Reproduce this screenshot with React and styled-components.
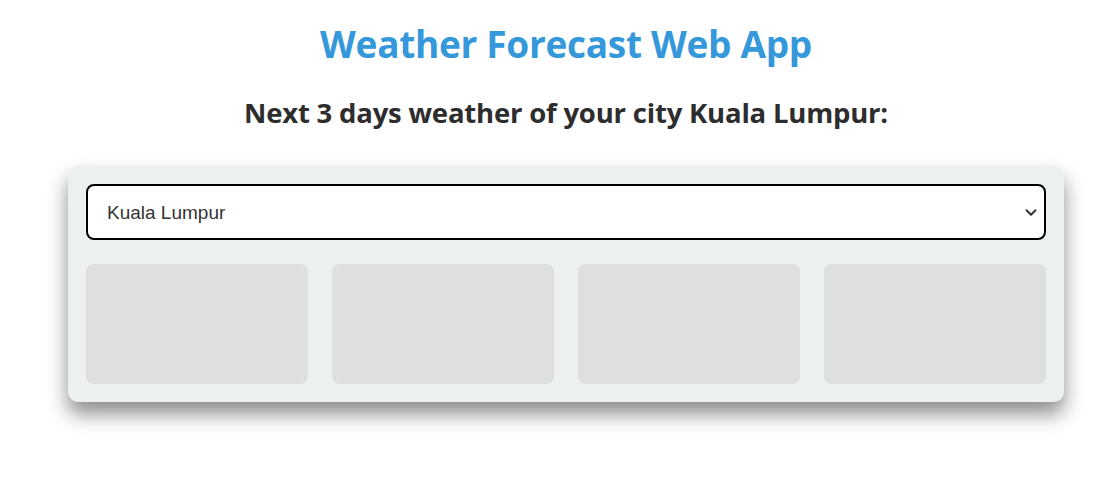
import React, { useState } from "react"
import styled, { createGlobalStyle } from "styled-components"

const GlobalStyle = createGlobalStyle`
	html, body {
		margin: 0;
		padding: 0;
		background: #ffffff;
		font-family: "Open Sans", "Noto Sans", sans-serif;
	}
`

const Page = styled.main`
	width: 996px;
	margin-left: 68px;
	padding: 19px 0 60px;
`

const Title = styled.h1`
	margin: 0;
	text-align: center;
	color: #3498db;
	font-size: 37px;
	font-weight: 700;
	line-height: 50px;
	letter-spacing: -0.3px;
`

const Subtitle = styled.h2`
	margin: 25px 0 0;
	text-align: center;
	color: #2d2d2d;
	font-size: 27.5px;
	font-weight: 700;
	line-height: 38px;
	letter-spacing: -0.2px;
`

const Panel = styled.section`
	margin-top: 34px;
	padding: 18px;
	background: #ecf0f1;
	border-radius: 10px;
	box-shadow: 0 12px 20px rgba(0, 0, 0, 0.45);
	display: flex;
	flex-direction: column;
	gap: 24px;
`

const SelectWrap = styled.div`
	position: relative;
`

const CitySelect = styled.select`
	appearance: none;
	display: block;
	height: 56px;
	width: 100%;
	padding: 0 40px 0 19px;
	border: 2px solid #000000;
	border-radius: 8px;
	background: #ffffff;
	color: #333333;
	font-family: "Liberation Sans", Arial, sans-serif;
	font-size: 19px;
	outline: none;
`

const Chevron = styled.svg`
	position: absolute;
	right: 9px;
	top: 50%;
	width: 12px;
	height: 8px;
	transform: translateY(-40%);
	pointer-events: none;
`

const Days = styled.div`
	display: grid;
	grid-template-columns: repeat(4, 1fr);
	gap: 24px;
`

const DayCard = styled.div`
	height: 120px;
	background: #dedfe1;
	border-radius: 8px;
`

const cities = ["Kuala Lumpur", "Singapore", "Jakarta", "Bangkok"]

const App = () => {
	const [city, setCity] = useState(cities[0])

	return (
		<>
			<GlobalStyle />
			<Page>
				<Title>Weather Forecast Web App</Title>
				<Subtitle>Next 3 days weather of your city {city}:</Subtitle>
				<Panel>
					<SelectWrap>
						<CitySelect value={city} onChange={(e) => setCity(e.target.value)}>
							{cities.map((c) => (
								<option key={c} value={c}>
									{c}
								</option>
							))}
						</CitySelect>
						<Chevron viewBox="0 0 12 8">
							<path
								d="M1.5 1.5 L6 6 L10.5 1.5"
								fill="none"
								stroke="#333"
								strokeWidth="2"
								strokeLinecap="round"
								strokeLinejoin="round"
							/>
						</Chevron>
					</SelectWrap>
					<Days>
						{[0, 1, 2, 3].map((i) => (
							<DayCard key={i} />
						))}
					</Days>
				</Panel>
			</Page>
		</>
	)
}

export default App
